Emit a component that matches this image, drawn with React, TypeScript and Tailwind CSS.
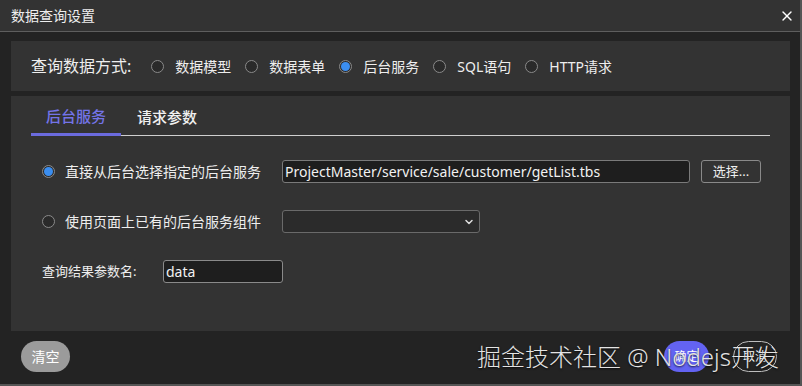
import { X, ChevronDown } from "lucide-react";

const font = { fontFamily: '"Noto Sans", "Noto Sans CJK SC", sans-serif' };

function Radio({ checked }: { checked?: boolean }) {
  return (
    <span className="flex h-[13px] w-[13px] shrink-0 items-center justify-center rounded-full border border-[#8a8a8a] bg-[#2a2a2a]">
      {checked ? <span className="h-[9px] w-[9px] rounded-full bg-[#3b8ef0]" /> : null}
    </span>
  );
}

const methods = [
  { label: "数据模型" },
  { label: "数据表单" },
  { label: "后台服务", checked: true },
  { label: "SQL语句" },
  { label: "HTTP请求" }
];

export default function App() {
  return (
    <div
      className="relative flex h-[386px] w-[802px] flex-col overflow-hidden border-r-2 border-b-2 border-[#555] bg-[#232323] text-[#eee]"
      style={font}
    >
      {/* title bar */}
      <div className="flex h-[32px] shrink-0 items-center justify-between border-b border-[#5e5e5e] bg-[#333] pl-[11px] pr-[5px]">
        <span className="text-[14px] leading-none">数据查询设置</span>
        <X className="h-[16px] w-[16px] text-white" strokeWidth={2} />
      </div>

      <div className="flex flex-1 flex-col pl-[11px] pr-[10px] pt-[9px]">
        {/* query method */}
        <div className="flex h-[50px] shrink-0 items-center bg-[#333] pl-[20px]">
          <span className="mr-[20px] text-[16px]">查询数据方式:</span>
          {methods.map((m) => (
            <label key={m.label} className="mr-[14px] flex items-center gap-[11px] text-[14px]">
              <Radio checked={m.checked} />
              <span>{m.label}</span>
            </label>
          ))}
        </div>

        {/* tabs panel */}
        <div className="mt-[5px] h-[235px] shrink-0 bg-[#333] px-[20px]">
          <div className="flex h-[40px] border-b border-[#cfcfcf]">
            <div className="-mb-px flex items-center border-b-[3px] border-[#6b6bde] px-[15px] pt-[3px] text-[15px] font-medium text-[#7474e8]">
              后台服务
            </div>
            <div className="flex items-center px-[16px] pt-[3px] text-[15px] font-medium text-[#f0f0f0]">
              请求参数
            </div>
          </div>

          <div className="flex flex-col gap-[27px] pl-[11px] pt-[24px]">
            <div className="flex h-[23px] items-center">
              <div className="flex w-[240px] items-center gap-[10px]">
                <Radio checked />
                <span className="text-[14px]">直接从后台选择指定的后台服务</span>
              </div>
              <div className="flex h-[23px] w-[408px] items-center rounded-[3px] border border-[#7a7a7a] bg-[#1e1e1e] px-[2px] text-[14px] text-[#f2f2f2]">
                ProjectMaster/service/sale/customer/getList.tbs
              </div>
              <button className="ml-[11px] flex h-[23px] w-[60px] items-center justify-center rounded-[3px] border border-[#8a8a8a] bg-[#333] text-[13px] text-[#eee]">
                选择...
              </button>
            </div>

            <div className="flex h-[23px] items-center">
              <div className="flex w-[240px] items-center gap-[10px]">
                <Radio />
                <span className="text-[14px]">使用页面上已有的后台服务组件</span>
              </div>
              <div className="flex h-[23px] w-[198px] items-center justify-end rounded-[3px] border border-[#6a6a6a] bg-[#2b2b2b] pr-[4px]">
                <ChevronDown className="h-[12px] w-[12px] text-[#ddd]" strokeWidth={3} />
              </div>
            </div>

            <div className="flex h-[23px] items-center">
              <span className="w-[121px] text-[13px]">查询结果参数名:</span>
              <div className="flex h-[23px] w-[120px] items-center rounded-[3px] border border-[#8a8a8a] bg-[#1e1e1e] px-[2px] text-[14px] text-[#f2f2f2]">
                data
              </div>
            </div>
          </div>
        </div>

        {/* footer */}
        <div className="flex flex-1 items-start justify-between pl-[10px] pr-[13px] pt-[10px]">
          <button className="flex h-[31px] w-[49px] items-center justify-center rounded-full bg-[#9b9b9b] text-[14px] text-white">
            清空
          </button>
          <div className="flex items-center gap-[24px]">
            <button className="flex h-[31px] w-[45px] items-center justify-center rounded-full bg-[#6363f2] text-[12px] text-white">
              确定
            </button>
            <button className="flex h-[31px] w-[44px] items-center justify-center rounded-full border border-[#bdbdbd] text-[12px] text-white">
              取消
            </button>
          </div>
        </div>
      </div>

      {/* watermark */}
      <div
        className="pointer-events-none absolute left-[477px] top-[339px] whitespace-nowrap text-[24px] font-light text-[#e4e4e4]"
        style={{ textShadow: "0 1px 2px rgba(0,0,0,0.8)" }}
      >
        掘金技术社区 @ Nodejs开发
      </div>
    </div>
  );
}
